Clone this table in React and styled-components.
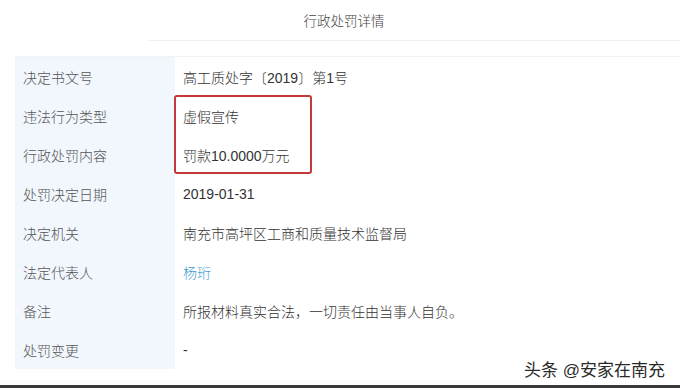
import React from "react";
import styled, { createGlobalStyle } from "styled-components";

const Global = createGlobalStyle`
  html, body { margin: 0; padding: 0; background: #fff; }
  body { font-family: "Liberation Sans", "Noto Sans CJK SC", sans-serif; }
`;

const Page = styled.div`
  position: relative;
  width: 680px;
  height: 388px;
  display: flex;
  flex-direction: column;
  overflow: hidden;
  background: #fff;
`;

const Header = styled.div`
  height: 40px;
  display: flex;
  align-items: center;
  justify-content: center;
  padding-left: 8px;
  font-size: 13.5px;
  font-weight: 300;
  color: #444;
`;

const Rule = styled.div`
  height: 1px;
  margin-left: 148px;
  background: #efefef;
`;

const Table = styled.div`
  position: relative;
  margin: 15px 0 0 15px;
  border-top: 1px solid #f3f3f3;
  display: grid;
  grid-template-columns: 160px 1fr;
  grid-auto-rows: 39px;
`;

const Label = styled.div`
  background: #f1f7fd;
  display: flex;
  align-items: center;
  padding-left: 8px;
  font-size: 14px;
  font-weight: 300;
  color: #555;
`;

const Value = styled.div`
  display: flex;
  align-items: center;
  padding-left: 8px;
  font-size: 14px;
  font-weight: 300;
  color: ${(p) => (p.$link ? "#3d9bd2" : "#333")};
`;

const Highlight = styled.div`
  position: absolute;
  left: 159px;
  top: 38px;
  width: 138px;
  height: 79px;
  border: 2.5px solid #c23a3c;
  border-radius: 3px;
  box-sizing: border-box;
  pointer-events: none;
`;

const Spacer = styled.div`
  flex: 1;
`;

const BottomBar = styled.div`
  height: 3px;
  background: #3a3a3a;
`;

const Watermark = styled.div`
  position: absolute;
  right: 15px;
  bottom: 7px;
  font-size: 17px;
  color: #2a2a2a;
  text-shadow: 0 0 2px #fff, 0 0 2px #fff, 1px 1px 0 #fff;
`;

const rows = [
  ["决定书文号", "高工质处字〔2019〕第1号"],
  ["违法行为类型", "虚假宣传"],
  ["行政处罚内容", "罚款10.0000万元"],
  ["处罚决定日期", "2019-01-31"],
  ["决定机关", "南充市高坪区工商和质量技术监督局"],
  ["法定代表人", "杨珩", true],
  ["备注", "所报材料真实合法，一切责任由当事人自负。"],
  ["处罚变更", "-"],
];

export default function App() {
  return (
    <>
      <Global />
      <Page>
        <Header>行政处罚详情</Header>
        <Rule />
        <Table>
          {rows.map(([l, v, link]) => (
            <React.Fragment key={l}>
              <Label>{l}</Label>
              <Value $link={link}>{v}</Value>
            </React.Fragment>
          ))}
          <Highlight />
        </Table>
        <Spacer />
        <BottomBar />
        <Watermark>头条 @安家在南充</Watermark>
      </Page>
    </>
  );
}
